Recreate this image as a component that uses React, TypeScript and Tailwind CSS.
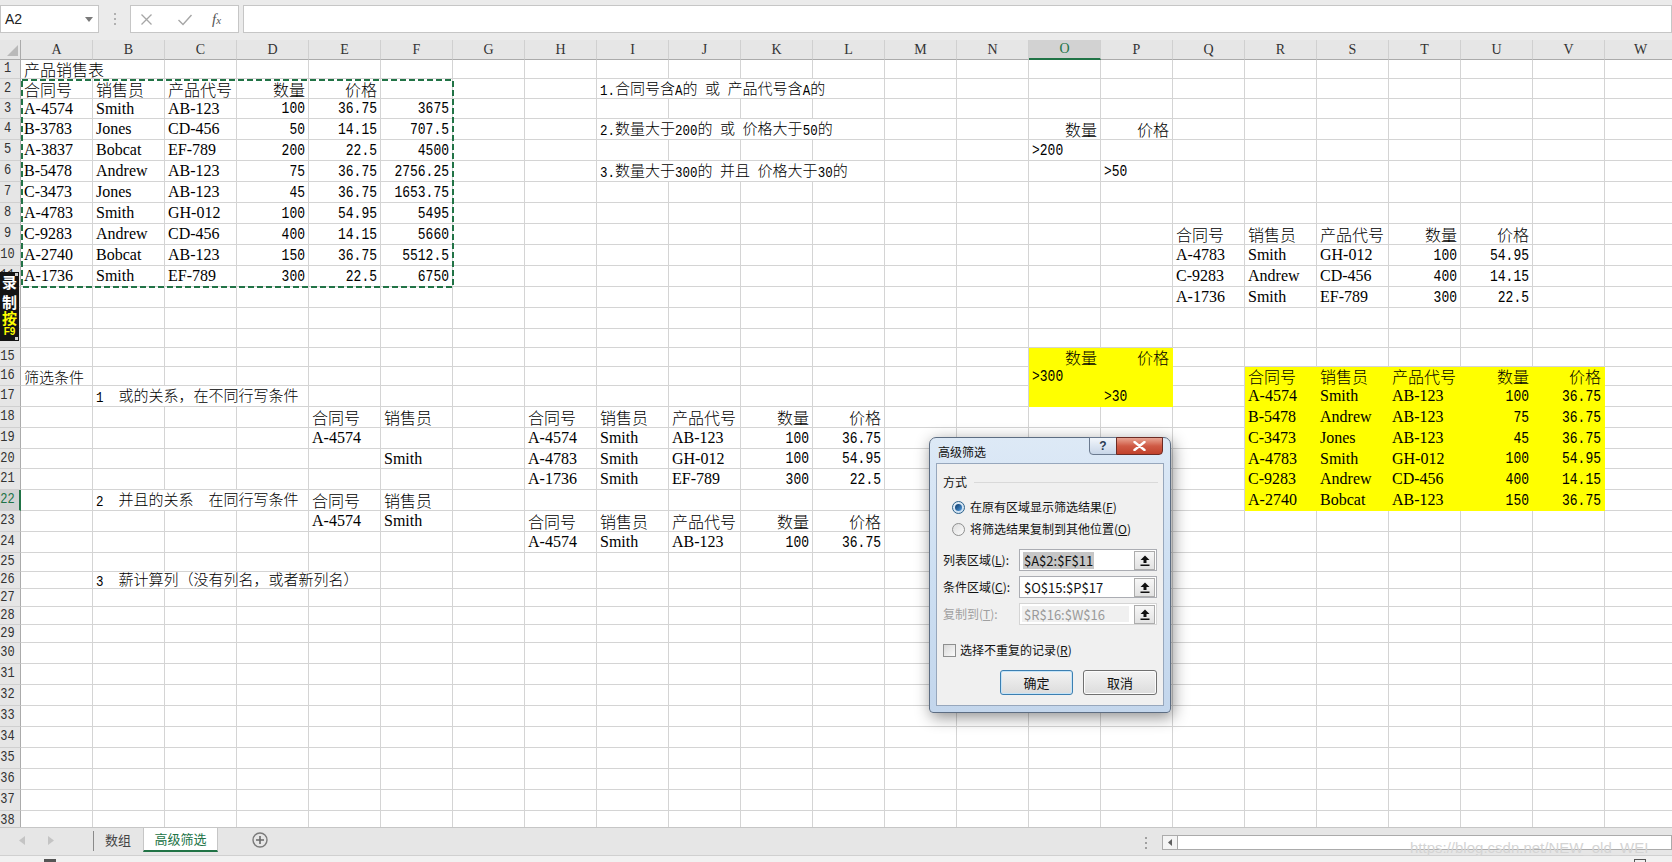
import React from 'react';

type Kind = 'c' | 'cr' | 'c15' | 's' | 'n' | 'nl' | 'm';
interface Cell {
  t: string;
  k: Kind;
  span?: number;
  y?: boolean;
}

const COLS = 'ABCDEFGHIJKLMNOPQRSTUVW'.split('');
const ROW_H: number[] = [
  19, 20, 20, 21, 21, 21, 21, 21, 21, 21, 21, 21, 21, 19, 19, 19, 21, 21, 21, 20, 21, 21, 21, 21, 19, 17, 18, 18, 18,
  21, 21, 21, 21, 21, 21, 21, 21, 21,
];
const H_CLS: Record<number, string> = {
  17: 'h-[17px]',
  18: 'h-[18px]',
  19: 'h-[19px]',
  20: 'h-[20px]',
  21: 'h-[21px]',
};
const W_CLS: Record<number, string> = {
  1: 'w-[72px]',
  2: 'w-[144px]',
  3: 'w-[216px]',
  4: 'w-[288px]',
};

const data: Record<number, Record<string, Cell>> = {};
function put(row: number, col: string, t: string, k: Kind, extra: Partial<Cell> = {}) {
  if (!data[row]) data[row] = {};
  data[row][col] = { t, k, ...extra };
}
function putRec(row: number, start: string, vals: string[], kinds: Kind[], y = false) {
  const s = COLS.indexOf(start);
  vals.forEach((v, i) => put(row, COLS[s + i], v, kinds[i], { y }));
}

const HDR = ['合同号', '销售员', '产品代号', '数量', '价格'];
const HK: Kind[] = ['c', 'c', 'c', 'cr', 'cr'];
const RK: Kind[] = ['s', 's', 's', 'n', 'n', 'n'];

const main = [
  ['A-4574', 'Smith', 'AB-123', '100', '36.75', '3675'],
  ['B-3783', 'Jones', 'CD-456', '50', '14.15', '707.5'],
  ['A-3837', 'Bobcat', 'EF-789', '200', '22.5', '4500'],
  ['B-5478', 'Andrew', 'AB-123', '75', '36.75', '2756.25'],
  ['C-3473', 'Jones', 'AB-123', '45', '36.75', '1653.75'],
  ['A-4783', 'Smith', 'GH-012', '100', '54.95', '5495'],
  ['C-9283', 'Andrew', 'CD-456', '400', '14.15', '5660'],
  ['A-2740', 'Bobcat', 'AB-123', '150', '36.75', '5512.5'],
  ['A-1736', 'Smith', 'EF-789', '300', '22.5', '6750'],
];

put(1, 'A', '产品销售表', 'c', { span: 2 });
putRec(2, 'A', HDR, HK);
main.forEach((r, i) => putRec(3 + i, 'A', r, RK));

put(2, 'I', '1.合同号含A的 或 产品代号含A的', 'm', { span: 4 });
put(4, 'I', '2.数量大于200的 或 价格大于50的', 'm', { span: 4 });
put(6, 'I', '3.数量大于300的 并且 价格大于30的', 'm', { span: 4 });

put(4, 'O', '数量', 'cr');
put(4, 'P', '价格', 'cr');
put(5, 'O', '>200', 'nl');
put(6, 'P', '>50', 'nl');

putRec(9, 'Q', HDR, HK);
putRec(10, 'Q', ['A-4783', 'Smith', 'GH-012', '100', '54.95'], RK);
putRec(11, 'Q', ['C-9283', 'Andrew', 'CD-456', '400', '14.15'], RK);
putRec(12, 'Q', ['A-1736', 'Smith', 'EF-789', '300', '22.5'], RK);

put(15, 'O', '数量', 'cr', { y: true });
put(15, 'P', '价格', 'cr', { y: true });
put(16, 'O', '>300', 'nl', { y: true });
put(16, 'P', '', 'nl', { y: true });
put(17, 'O', '', 'nl', { y: true });
put(17, 'P', '>30', 'nl', { y: true });

put(16, 'A', '筛选条件', 'c15');
putRec(16, 'R', HDR, HK, true);
const yel = [
  ['A-4574', 'Smith', 'AB-123', '100', '36.75'],
  ['B-5478', 'Andrew', 'AB-123', '75', '36.75'],
  ['C-3473', 'Jones', 'AB-123', '45', '36.75'],
  ['A-4783', 'Smith', 'GH-012', '100', '54.95'],
  ['C-9283', 'Andrew', 'CD-456', '400', '14.15'],
  ['A-2740', 'Bobcat', 'AB-123', '150', '36.75'],
];
yel.forEach((r, i) => putRec(17 + i, 'R', r, RK, true));

put(17, 'B', '1  或的关系，在不同行写条件', 'm', { span: 3 });
put(18, 'E', '合同号', 'c');
put(18, 'F', '销售员', 'c');
put(19, 'E', 'A-4574', 's');
put(20, 'F', 'Smith', 's');
putRec(18, 'H', HDR, HK);
putRec(19, 'H', ['A-4574', 'Smith', 'AB-123', '100', '36.75'], RK);
putRec(20, 'H', ['A-4783', 'Smith', 'GH-012', '100', '54.95'], RK);
putRec(21, 'H', ['A-1736', 'Smith', 'EF-789', '300', '22.5'], RK);

put(22, 'B', '2  并且的关系  在同行写条件', 'm', { span: 3 });
put(22, 'E', '合同号', 'c');
put(22, 'F', '销售员', 'c');
put(23, 'E', 'A-4574', 's');
put(23, 'F', 'Smith', 's');
putRec(23, 'H', HDR, HK);
putRec(24, 'H', ['A-4574', 'Smith', 'AB-123', '100', '36.75'], RK);

put(26, 'B', '3  薪计算列（没有列名，或者新列名）', 'm', { span: 4 });

function Mixed({ text }: { text: string }) {
  const runs = text.match(/[\x00-\x7f]+|[^\x00-\x7f]+/g) || [];
  return (
    <span className="whitespace-pre leading-none">
      {runs.map((r, i) =>
        /^[\x00-\x7f]/.test(r) ? (
          <span key={i} className="inline-block scale-y-[1.2] font-['Liberation_Mono',monospace] text-[12.5px]">
            {r}
          </span>
        ) : (
          <span key={i} className="font-['Noto_Sans_CJK_SC',sans-serif] font-light text-[15px]">
            {r}
          </span>
        ),
      )}
    </span>
  );
}

function CellContent({ c }: { c: Cell }) {
  switch (c.k) {
    case 'c':
    case 'cr':
      return <span className="font-['Noto_Sans_CJK_SC',sans-serif] font-light text-[16px]">{c.t}</span>;
    case 'c15':
      return <span className="font-['Noto_Sans_CJK_SC',sans-serif] font-light text-[15px]">{c.t}</span>;
    case 's':
      return <span className="font-['Liberation_Serif',serif] text-[16px]">{c.t}</span>;
    case 'n':
    case 'nl':
      return (
        <span className="inline-block scale-y-[1.2] font-['Liberation_Mono',monospace] text-[13px]">{c.t}</span>
      );
    case 'm':
      return <Mixed text={c.t} />;
  }
}

function Row({ r }: { r: number }) {
  const h = ROW_H[r - 1];
  const rowData = data[r] || {};
  const cells: React.ReactNode[] = [];
  let i = 0;
  while (i < COLS.length) {
    const col = COLS[i];
    const c = rowData[col];
    const span = c?.span || 1;
    const right = c && (c.k === 'cr' || c.k === 'n');
    cells.push(
      <div
        key={col}
        className={`${W_CLS[span]} shrink-0 border-r border-b flex items-center px-[3px] whitespace-pre leading-none text-black ${
          right ? 'justify-end' : 'justify-start'
        } ${c?.y ? 'bg-[#ffff00] border-[#ffff00]' : 'border-[#d4d4d4]'}`}
      >
        {c && <CellContent c={c} />}
      </div>,
    );
    i += span;
  }
  const sel = r === 22;
  return (
    <div className={`flex ${H_CLS[h]}`}>
      <div
        className={`w-[21px] shrink-0 border-b border-[#d0d0d0] flex items-center ${
          sel ? 'bg-[#d2d2d2] border-r-2 border-r-[#217346] text-[#217346]' : 'bg-[#e6e6e6] border-r border-r-[#ababab] text-[#333]'
        }`}
      >
        <span className="w-[15px] text-center font-['Liberation_Mono',monospace] text-[12px] leading-none inline-block scale-y-[1.15]">
          {r}
        </span>
      </div>
      {cells}
    </div>
  );
}

function HeaderRow() {
  return (
    <div className="flex h-[20px]">
      <div className="w-[21px] shrink-0 bg-[#e6e6e6] border-r border-b border-[#ababab] flex items-end justify-end pr-[2px] pb-[3px]">
        <svg width="11" height="11" viewBox="0 0 11 11">
          <path d="M11 0 L11 11 L0 11 Z" fill="#b9b9b9" />
        </svg>
      </div>
      {COLS.map((c) => {
        const sel = c === 'O';
        return (
          <div
            key={c}
            className={`w-[72px] shrink-0 border-r border-r-[#d0d0d0] flex items-center justify-center font-['Liberation_Serif',serif] text-[14px] leading-none ${
              sel
                ? 'bg-[#d2d2d2] border-b-2 border-b-[#217346] text-[#217346]'
                : 'bg-[#e6e6e6] border-b border-b-[#ababab] text-[#333]'
            }`}
          >
            {c}
          </div>
        );
      })}
    </div>
  );
}

function Toolbar() {
  return (
    <div className="h-[40px] bg-[#ebebeb] flex items-start pt-[5px] font-['Liberation_Sans',sans-serif]">
      <div className="w-[99px] h-[28px] bg-white border border-[#c6c6c6] flex items-center justify-between pl-[4px] pr-[5px]">
        <span className="text-[14px] text-[#222]">A2</span>
        <svg width="8" height="5" viewBox="0 0 8 5">
          <path d="M0 0 L8 0 L4 5 Z" fill="#7a7a7a" />
        </svg>
      </div>
      <div className="w-[31px] h-[28px] flex flex-col items-center justify-center gap-[3px]">
        <span className="w-[2px] h-[2px] bg-[#b0b0b0]" />
        <span className="w-[2px] h-[2px] bg-[#b0b0b0]" />
        <span className="w-[2px] h-[2px] bg-[#b0b0b0]" />
      </div>
      <div className="w-[109px] h-[28px] bg-white border border-[#c6c6c6] flex items-center pl-[9px]">
        <svg width="13" height="13" viewBox="0 0 13 13">
          <path d="M1.5 1.5 L11.5 11.5 M11.5 1.5 L1.5 11.5" stroke="#a6a6a6" strokeWidth="1.3" />
        </svg>
        <svg width="16" height="13" viewBox="0 0 16 13" className="ml-[24px]">
          <path d="M1.5 7 L6 11.5 L14.5 2" stroke="#a6a6a6" strokeWidth="1.4" fill="none" />
        </svg>
        <span className="ml-[19px] font-['Liberation_Serif',serif] italic text-[15px] text-[#555] leading-none">
          f<span className="text-[11px]">x</span>
        </span>
      </div>
      <div className="ml-[4px] flex-1 h-[28px] bg-white border border-[#c6c6c6]" />
    </div>
  );
}

function Radio({ on }: { on: boolean }) {
  return (
    <span
      className={`w-[13px] h-[13px] rounded-full border flex items-center justify-center ${
        on ? 'border-[#2c628b] bg-gradient-to-br from-[#e8f1f9] to-[#c6dbef]' : 'border-[#8e8f8f] bg-gradient-to-br from-[#dedede] to-[#fbfbfb]'
      }`}
    >
      {on && <span className="w-[7px] h-[7px] rounded-full bg-gradient-to-br from-[#0b3a68] to-[#4f9ade]" />}
    </span>
  );
}

function RefBtn() {
  return (
    <div className="absolute right-[1px] top-[1px] w-[21px] h-[19px] border border-[#acacac] bg-gradient-to-b from-[#f7f7f7] to-[#e2e2e2] flex items-center justify-center">
      <svg width="10" height="11" viewBox="0 0 10 11">
        <path d="M5 0.5 L9.5 5 L6.5 5 L6.5 8 L3.5 8 L3.5 5 L0.5 5 Z" fill="#111" />
        <rect x="0.5" y="9.5" width="9" height="1.5" fill="#111" />
      </svg>
    </div>
  );
}

function Dialog() {
  return (
    <div className="absolute left-[929px] top-[437px] w-[242px] h-[276px] rounded-t-[7px] rounded-b-[4px] border border-[#5d6d82] bg-gradient-to-b from-[#dde9f6] via-[#cddff2] to-[#c3d6ec] shadow-[2px_4px_16px_rgba(0,0,0,0.45)] flex flex-col font-['Noto_Sans_CJK_SC',sans-serif] text-[12px] leading-none z-20">
      <div className="h-[25px] shrink-0 relative pl-[8px] pt-[8px] text-[#111]">
        <span className="text-[12px]">高级筛选</span>
        <div className="absolute left-[159px] top-[-1px] w-[28px] h-[18px] border border-[#6b7a8f] rounded-bl-[4px] bg-gradient-to-b from-[#f2f6fb] to-[#c8d6e8] flex items-center justify-center">
          <span className="font-['Liberation_Sans',sans-serif] font-bold text-[12px] text-[#2b3c55]">?</span>
        </div>
        <div className="absolute left-[186px] top-[-1px] w-[47px] h-[18px] border border-[#6c2b24] rounded-br-[4px] bg-gradient-to-b from-[#e8a493] via-[#cf5a45] to-[#c1412b] flex items-center justify-center">
          <svg width="13" height="10" viewBox="0 0 13 10">
            <path d="M1.5 1 L11.5 9 M11.5 1 L1.5 9" stroke="#fff" strokeWidth="2.4" strokeLinecap="round" />
          </svg>
        </div>
      </div>
      <div className="mx-[6px] mb-[6px] flex-1 border border-[#97a7bc] bg-[#f0f0f0] flex flex-col pl-[6px] text-[#111]">
        <div className="mt-[8px] h-[20px] flex items-center">
          <span>方式</span>
          <span className="ml-[7px] mr-[5px] flex-1 h-px bg-[#d9d9d9]" />
        </div>
        <div className="mt-[5px] h-[20px] flex items-center pl-[9px] gap-[5px]">
          <Radio on />
          <span>
            在原有区域显示筛选结果(<span className="underline">F</span>)
          </span>
        </div>
        <div className="mt-[2px] h-[20px] flex items-center pl-[9px] gap-[5px]">
          <Radio on={false} />
          <span>
            将筛选结果复制到其他位置(<span className="underline">O</span>)
          </span>
        </div>
        <div className="mt-[10px] h-[22px] flex items-center">
          <span className="w-[76px]">
            列表区域(<span className="underline">L</span>):
          </span>
          <div className="relative w-[138px] h-[22px] bg-white border border-[#abadb3] flex items-center pl-[3px]">
            <span className="bg-[#c6c6c6] text-[13px] px-[1px] py-[2px]">$A$2:$F$11</span>
            <RefBtn />
          </div>
        </div>
        <div className="mt-[5px] h-[22px] flex items-center">
          <span className="w-[76px]">
            条件区域(<span className="underline">C</span>):
          </span>
          <div className="relative w-[138px] h-[22px] bg-white border border-[#abadb3] flex items-center pl-[4px]">
            <span className="text-[13px]">$O$15:$P$17</span>
            <RefBtn />
          </div>
        </div>
        <div className="mt-[5px] h-[22px] flex items-center text-[#a0a0a0]">
          <span className="w-[76px]">
            复制到(<span className="underline">T</span>):
          </span>
          <div className="relative w-[138px] h-[22px] bg-white border border-[#d5d5d5] flex items-center p-[2px]">
            <div className="w-[107px] h-full bg-[#f0f0f0] flex items-center pl-[2px]">
              <span className="text-[13px] text-[#9a9a9a]">$R$16:$W$16</span>
            </div>
            <RefBtn />
          </div>
        </div>
        <div className="mt-[16px] h-[18px] flex items-center gap-[4px]">
          <span className="w-[13px] h-[13px] border border-[#8e8f8f] bg-gradient-to-br from-[#d9d9d9] to-[#fbfbfb]" />
          <span>
            选择不重复的记录(<span className="underline">R</span>)
          </span>
        </div>
        <div className="mt-[11px] h-[25px] flex justify-end gap-[10px] pr-[6px]">
          <div className="w-[73px] h-[25px] rounded-[3px] border border-[#3c7fb1] bg-gradient-to-b from-[#f3f3f3] to-[#dcdcdc] shadow-[inset_0_0_0_1px_#c5e4f8] flex items-center justify-center text-[13px]">
            确定
          </div>
          <div className="w-[74px] h-[25px] rounded-[3px] border border-[#707070] bg-gradient-to-b from-[#f3f3f3] to-[#dcdcdc] shadow-[inset_0_0_0_1px_#fcfcfc] flex items-center justify-center text-[13px]">
            取消
          </div>
        </div>
      </div>
    </div>
  );
}

function TabBar() {
  return (
    <div className="h-[28px] bg-[#e6e6e6] border-t border-[#c6c6c6] flex items-start relative font-['Noto_Sans_CJK_SC',sans-serif]">
      <div className="w-[93px] h-[24px] flex items-center">
        <svg width="6" height="9" viewBox="0 0 6 9" className="ml-[19px]">
          <path d="M6 0 L0 4.5 L6 9 Z" fill="#c4c4c4" />
        </svg>
        <svg width="6" height="9" viewBox="0 0 6 9" className="ml-[23px]">
          <path d="M0 0 L6 4.5 L0 9 Z" fill="#c4c4c4" />
        </svg>
      </div>
      <div className="w-px h-[20px] mt-[3px] bg-[#8a8a8a]" />
      <div className="w-[49px] h-[24px] flex items-center pl-[11px] text-[13px] text-[#444]">数组</div>
      <div className="w-[75px] h-[24px] bg-white border-x border-[#c6c6c6] border-b-2 border-b-[#217346] flex items-center justify-center text-[13px] text-[#217346]">
        高级筛选
      </div>
      <div className="ml-[34px] h-[24px] flex items-center">
        <svg width="16" height="16" viewBox="0 0 16 16">
          <circle cx="8" cy="8" r="7" stroke="#7a7a7a" strokeWidth="1.4" fill="none" />
          <path d="M8 4 L8 12 M4 8 L12 8" stroke="#6a6a6a" strokeWidth="1.6" />
        </svg>
      </div>
      <div className="absolute left-[1145px] top-[9px] flex flex-col gap-[3px]">
        <span className="w-[2px] h-[2px] bg-[#a0a0a0]" />
        <span className="w-[2px] h-[2px] bg-[#a0a0a0]" />
        <span className="w-[2px] h-[2px] bg-[#a0a0a0]" />
      </div>
      <div className="absolute left-[1162px] right-0 top-[7px] h-[15px] bg-white border border-[#ababab] flex">
        <div className="w-[15px] h-full border-r border-[#ababab] bg-[#f4f4f4] flex items-center justify-center">
          <svg width="4" height="7" viewBox="0 0 4 7">
            <path d="M4 0 L0 3.5 L4 7 Z" fill="#606060" />
          </svg>
        </div>
      </div>
    </div>
  );
}

export default function App() {
  const rows = Array.from({ length: 38 }, (_, i) => i + 1);
  return (
    <div className="relative w-[1672px] h-[862px] overflow-hidden bg-white">
      <Toolbar />
      <div className="relative h-[787px] overflow-hidden">
        <HeaderRow />
        {rows.map((r) => (
          <Row key={r} r={r} />
        ))}
        <svg className="absolute left-[21px] top-[39px]" width="434" height="210" viewBox="0 0 434 210">
          <rect x="1" y="1" width="431" height="207" fill="none" stroke="#217346" strokeWidth="2" strokeDasharray="6 3" />
        </svg>
        <div className="absolute left-0 top-[232px] w-[19px] h-[69px] bg-[#141414] flex flex-col items-center pt-[1px] font-['Noto_Sans_CJK_SC',sans-serif] font-bold leading-none">
          <span className="absolute right-[1px] top-[1px] w-[3px] h-[3px] bg-[#cfcfcf]" />
          <span className="absolute right-[1px] bottom-[1px] w-[3px] h-[3px] bg-[#cfcfcf]" />
          <span className="block text-[15px] leading-[15px] text-white mt-[1px]">录</span>
          <span className="block text-[15px] leading-[15px] text-white mt-[5px]">制</span>
          <span className="block text-[15px] leading-[15px] text-[#ffff00] mt-[1px]">按</span>
          <span className="block text-[10px] leading-[10px] text-[#ffff00] font-['Liberation_Sans',sans-serif] mt-[2px]">
            F9
          </span>
        </div>
      </div>
      <TabBar />
      <div className="h-[7px] bg-[#f1f1f1] border-t border-[#d0d0d0] relative">
        <span className="absolute left-[44px] top-[3px] w-[12px] h-[4px] bg-[#555]" />
        <span className="absolute left-[1634px] top-[3px] w-[12px] h-[4px] border border-[#555]" />
      </div>
      <Dialog />
      <div className="absolute left-[1410px] top-[837px] font-['Liberation_Sans',sans-serif] text-[15px] text-[#d4d4d4] whitespace-nowrap pointer-events-none z-10">
        https://blog.csdn.net/NEW_old_WEI
      </div>
    </div>
  );
}
